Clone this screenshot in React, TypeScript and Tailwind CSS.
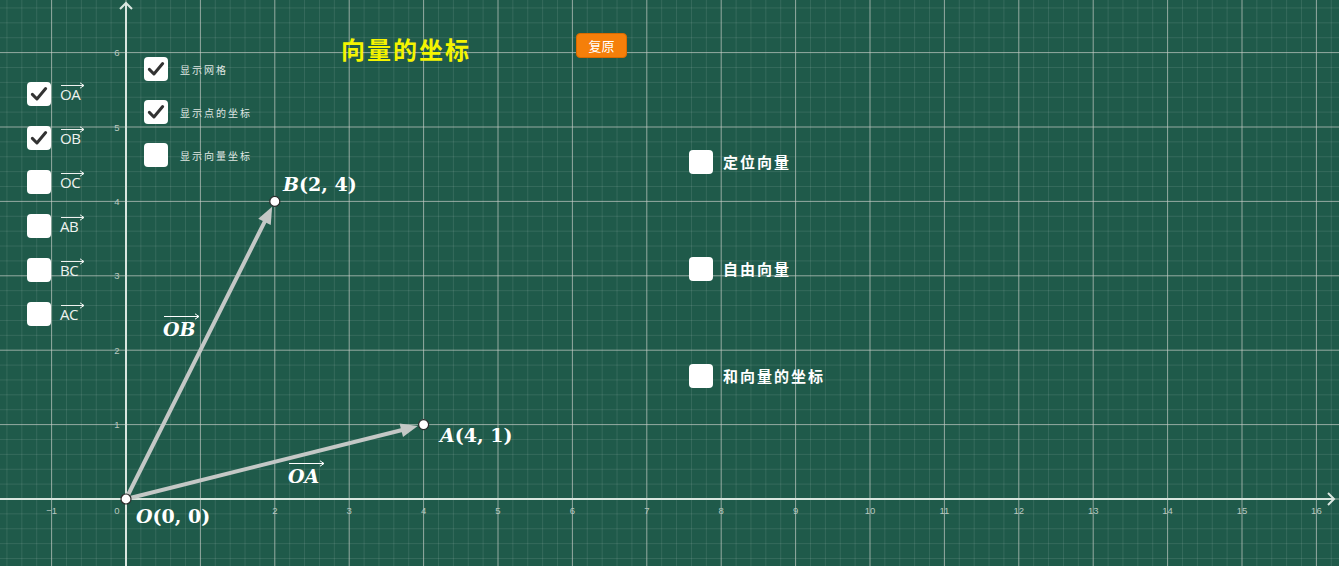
import React from 'react';

const U = 74.4;
const OX = 126;
const OY = 499;
const W = 1339;
const H = 566;

const px = (v: number) => OX + U * v;
const py = (v: number) => OY - U * v;

const Check: React.FC<{ on?: boolean }> = ({ on }) => (
  <div className="w-6 h-6 bg-white rounded-[4px] flex items-center justify-center shrink-0">
    {on && (
      <svg width="20" height="20" viewBox="0 0 24 24">
        <polyline points="4,12.5 9.5,18 20,5.5" fill="none" stroke="#333" strokeWidth="3.6" strokeLinecap="round" strokeLinejoin="round" />
      </svg>
    )}
  </div>
);

// text with a small arrow drawn over it
const Arrowed: React.FC<{ text: string; className?: string; w: number; pull?: string }> = ({ text, className, w, pull }) => (
  <div className="flex flex-col items-start leading-none">
    <svg width={w} height="7" viewBox={`0 0 ${w} 7`} className={`block ${pull ?? ''}`}>
      <line x1="1" y1="3.5" x2={w - 1} y2="3.5" stroke="currentColor" strokeWidth="1" />
      <polyline points={`${w - 5},0.8 ${w - 1},3.5 ${w - 5},6.2`} fill="none" stroke="currentColor" strokeWidth="1" />
    </svg>
    <span className={className}>{text}</span>
  </div>
);

const leftItems = [
  { t: 'OA', on: true },
  { t: 'OB', on: true },
  { t: 'OC', on: false },
  { t: 'AB', on: false },
  { t: 'BC', on: false },
  { t: 'AC', on: false },
];

const smallItems = [
  { t: '显示网格', on: true },
  { t: '显示点的坐标', on: true },
  { t: '显示向量坐标', on: false },
];

const rightItems = ['定位向量', '自由向量', '和向量的坐标'];

const cjk = "font-['Noto_Sans_CJK_SC',sans-serif]";
const math = "font-['DejaVu_Serif','Liberation_Serif',serif]";

function Grid() {
  const minor: React.ReactNode[] = [];
  const major: React.ReactNode[] = [];
  for (let i = -10; i <= 90; i++) {
    const x = px(i / 5);
    if (x < 0 || x > W) continue;
    const isMajor = i % 5 === 0;
    (isMajor ? major : minor).push(
      <line key={'v' + i} x1={x} y1={0} x2={x} y2={H} stroke={isMajor ? 'rgba(200,205,200,0.7)' : 'rgba(255,255,255,0.1)'} strokeWidth="1" />
    );
  }
  for (let j = -10; j <= 40; j++) {
    const y = py(j / 5);
    if (y < 0 || y > H) continue;
    const isMajor = j % 5 === 0;
    (isMajor ? major : minor).push(
      <line key={'h' + j} x1={0} y1={y} x2={W} y2={y} stroke={isMajor ? 'rgba(200,205,200,0.7)' : 'rgba(255,255,255,0.1)'} strokeWidth="1" />
    );
  }
  const xt = [-1, 2, 3, 4, 5, 6, 7, 8, 9, 10, 11, 12, 13, 14, 15, 16];
  const yt = [1, 2, 3, 4, 5, 6];
  const head = (x1: number, y1: number, x2: number, y2: number) => {
    const a = Math.atan2(y2 - y1, x2 - x1);
    const L = 17;
    const Wd = 7;
    const bx = x2 - L * Math.cos(a);
    const by = y2 - L * Math.sin(a);
    const nx = -Math.sin(a) * Wd;
    const ny = Math.cos(a) * Wd;
    return `${x2},${y2} ${bx + nx},${by + ny} ${bx - nx},${by - ny}`;
  };
  const ax = px(4), ay = py(1), bx = px(2), by = py(4);
  const shaft = (x: number, y: number) => {
    const a = Math.atan2(y - OY, x - OX);
    return {
      tip: [x - 6 * Math.cos(a), y - 6 * Math.sin(a)],
      end: [x - 20 * Math.cos(a), y - 20 * Math.sin(a)],
    };
  };
  const sa = shaft(ax, ay);
  const sb = shaft(bx, by);
  return (
    <svg width={W} height={H} className="absolute inset-0">
      {minor}
      {major}
      {/* axes */}
      <line x1={0} y1={OY} x2={W - 5} y2={OY} stroke="#d9e6df" strokeWidth="2" />
      <polyline points={`${W - 11},${OY - 6} ${W - 5},${OY} ${W - 11},${OY + 6}`} fill="none" stroke="#d9e6df" strokeWidth="2" />
      <line x1={OX} y1={H} x2={OX} y2={3} stroke="#d9e6df" strokeWidth="2" />
      <polyline points={`${OX - 6},9 ${OX},3 ${OX + 6},9`} fill="none" stroke="#d9e6df" strokeWidth="2" />
      {xt.map((v) => (
        <text key={'xt' + v} x={px(v)} y={OY + 15} fill="#b9c8c0" fontSize="9.5" textAnchor="middle" fontFamily="Liberation Sans, sans-serif">
          {v < 0 ? '\u2212' + -v : v}
        </text>
      ))}
      <text x={OX - 9} y={OY + 15} fill="#b9c8c0" fontSize="9.5" textAnchor="middle" fontFamily="Liberation Sans, sans-serif">0</text>
      {yt.map((v) => (
        <text key={'yt' + v} x={OX - 9} y={py(v) + 3.5} fill="#b9c8c0" fontSize="9.5" textAnchor="middle" fontFamily="Liberation Sans, sans-serif">
          {v}
        </text>
      ))}
      {/* vectors */}
      <line x1={OX} y1={OY} x2={sa.end[0]} y2={sa.end[1]} stroke="#c4c8c6" strokeWidth="4" />
      <polygon points={head(OX, OY, sa.tip[0], sa.tip[1])} fill="#c4c8c6" />
      <line x1={OX} y1={OY} x2={sb.end[0]} y2={sb.end[1]} stroke="#c4c8c6" strokeWidth="4" />
      <polygon points={head(OX, OY, sb.tip[0], sb.tip[1])} fill="#c4c8c6" />
      {/* points */}
      {[[OX, OY], [ax, ay], [bx, by]].map(([x, y], i) => (
        <circle key={'p' + i} cx={x} cy={y} r="5" fill="#ffffff" stroke="#2a2a2a" strokeWidth="1.2" />
      ))}
    </svg>
  );
}

const PointLabel: React.FC<{ name: string; coord: string; className: string }> = ({ name, coord, className }) => (
  <div className={`absolute text-[19px] text-white whitespace-nowrap ${math} ${className}`}>
    <span className="italic font-bold">{name}</span>
    <span className="font-bold">({coord})</span>
  </div>
);

export default function App() {
  return (
    <div className="relative w-[1339px] h-[566px] overflow-hidden bg-[#1f5a4a]">
      <Grid />

      {/* controls laid over the canvas */}
      <div className="absolute inset-0 flex items-start">
        {/* left vector toggles */}
        <div className="ml-[27px] mt-[82px] w-[85px] shrink-0 flex flex-col gap-5">
          {leftItems.map((it) => (
            <div key={it.t} className="flex items-center gap-[9px] h-6">
              <Check on={it.on} />
              <div className="-mt-[4px] text-[#eef2ef]">
                <Arrowed text={it.t} w={25} pull="-mb-[2px]" className="font-['Open_Sans',sans-serif] text-[15px] tracking-[-0.5px]" />
              </div>
            </div>
          ))}
        </div>

        {/* display options */}
        <div className="ml-[32px] mt-[57px] flex flex-col gap-[19px]">
          {smallItems.map((it) => (
            <div key={it.t} className="flex items-center gap-[12px] h-6">
              <Check on={it.on} />
              <span className={`${cjk} text-[10px] tracking-[2px] text-[#dfe6e2]`}>{it.t}</span>
            </div>
          ))}
        </div>

        {/* title and reset */}
        <div className="absolute left-[341px] top-[33px] flex items-start gap-[105px]">
          <div className={`mt-[4px] text-[24px] font-bold text-[#f4f400] tracking-[2px] leading-none ${cjk}`}>向量的坐标</div>
          <button className={`w-[51px] h-[25px] rounded-[4px] bg-[#f57f0a] border border-[#d96a00] text-white text-[13px] ${cjk} flex items-center justify-center`}>
            复原
          </button>
        </div>

        {/* right toggles */}
        <div className="absolute left-[689px] top-[150px] flex flex-col gap-[83px]">
          {rightItems.map((t) => (
            <div key={t} className="flex items-center gap-[10px] h-6">
              <Check />
              <span className={`${cjk} text-[15px] font-bold text-white tracking-[2px]`}>{t}</span>
            </div>
          ))}
        </div>
      </div>

      {/* point labels */}
      <PointLabel name="B" coord="2, 4" className="left-[283px] top-[170px]" />
      <PointLabel name="A" coord="4, 1" className="left-[440px] top-[421px]" />
      <PointLabel name="O" coord="0, 0" className="left-[136px] top-[502px]" />

      {/* vector labels */}
      <div className={`absolute left-[163px] top-[313px] text-white ${math}`}>
        <Arrowed text="OB" w={37} className="italic font-bold text-[19px]" />
      </div>
      <div className={`absolute left-[288px] top-[460px] text-white ${math}`}>
        <Arrowed text="OA" w={37} className="italic font-bold text-[19px]" />
      </div>
    </div>
  );
}
